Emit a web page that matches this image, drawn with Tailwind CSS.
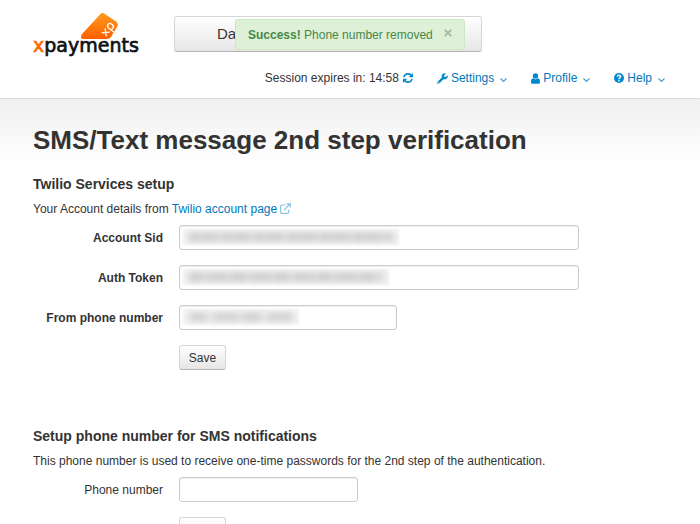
<!DOCTYPE html>
<html lang="en">
<head>
    <meta charset="UTF-8">
    <meta name="viewport" content="width=device-width, initial-scale=1.0">
    <title>X-Payments - SMS/Text message 2nd step verification</title>
    <script src="https://cdn.jsdelivr.net/npm/@tailwindcss/browser@4"></script>
</head>
<body class="bg-white font-['Liberation_Sans',Arial,sans-serif] text-[12px] leading-4 text-[#333333]">

    <!-- Alert -->
    <div role="alert" class="absolute z-10 top-[19px] left-1/2 -translate-x-1/2 w-[230px] h-[31px] pl-3 pr-3 flex items-center justify-between rounded-[3px] border border-[#d0e6bf] bg-[#dff0d8] text-[#468847] whitespace-nowrap">
        <span><strong>Success!</strong> Phone number removed</span>
        <button type="button" aria-label="Close" class="pb-1 text-[#acbfa7]">
            <svg class="w-[8px] h-[8px]" viewBox="0 0 8 8" fill="none" stroke="currentColor" stroke-width="2"><path d="M.7.7l6.600 6.600M7.300.7L.7 7.300"/></svg>
        </button>
    </div>

    <header class="h-[99px] border-b border-[#dddddd] flex flex-col">
        <div class="flex items-start pl-[33px]">
            <a href="#" class="w-[141px] shrink-0 pt-3" aria-label="xpayments">
                <svg class="w-[108px] h-[46px]" viewBox="0 0 108 46">
                    <defs>
                        <linearGradient id="card" x1="0" y1="0" x2="0" y2="1">
                            <stop offset="0" stop-color="#ff9a1f"/>
                            <stop offset="1" stop-color="#ff6000"/>
                        </linearGradient>
                    </defs>
                    <path d="M67 2.500Q69 0 72 2L83 9.500Q86 12 84 15L78 25Q76.500 27 74 27H51Q46 27 49 22Z" fill="url(#card)"/>
                    <g transform="translate(75 17.500) rotate(-52)" fill="none" stroke="#fff" stroke-width="1.300">
                        <path d="M-6.500 -3l5.500 6M-1 -3l-5.500 6M1.500 6.500V-.5Q1.500 -3 4 -3T6.500 -.5V.5Q6.500 3 4 3H1.500"/>
                    </g>
                    <text x="0" y="40" font-family="DejaVu Sans, sans-serif" font-size="19" fill="#111" stroke="#111" stroke-width=".7"><tspan fill="#ff6a00" stroke="#ff6a00">x</tspan>payments</text>
                </svg>
            </a>
            <button type="button" class="mt-4 w-[308px] h-[36px] pl-[42px] text-left text-[15px] leading-5 rounded-[3px] border border-[#d6d6d6] border-b-[#b3b3b3] bg-linear-to-b from-white to-[#e6e6e6]">Da</button>
        </div>
        <nav class="mt-3 pr-[35px] flex items-center justify-end">
            <span>Session expires in: 14:58</span>
            <a href="#" class="ml-1 text-[#0088cc]" aria-label="Refresh session">
                <svg class="w-[10px] h-[10px]" viewBox="0 0 1536 1536" fill="currentColor"><path d="M1511 928q0 5-1 7-64 268-268 434.500T764 1536q-146 0-282.500-55T238 1324l-129 129q-19 19-45 19t-45-19-19-45V960q0-26 19-45t45-19h448q26 0 45 19t19 45-19 45l-137 137q71 66 161 102t187 36q134 0 250-65t186-179q11-17 53-117 8-23 30-23h192q13 0 22.500 9.500t9.500 22.500zm25-800v448q0 26-19 45t-45 19h-448q-26 0-45-19t-19-45 19-45l138-138Q969 256 768 256q-134 0-250 65T332 500q-11 17-53 117-8 23-30 23H50q-13 0-22.500-9.500T18 608v-7q65-268 270-434.500T768 0q146 0 284 55.500T1297 212l130-129q19-19 45-19t45 19 19 45z"/></svg>
            </a>
            <a href="#" class="ml-6 flex items-center text-[#0077bb]">
                <svg class="w-[11px] h-[11px] mr-[3px] text-[#0088cc]" viewBox="0 0 512 512" fill="currentColor"><path d="M507 117c-2-9-14-12-20-5l-75 74-68-11-11-68 75-75c6-6 4-18-5-20-50-12-105 1-144 40-42 42-53 103-34 156L19 414c-25 25-25 54 0 79s54 25 79 0l206-206c53 19 115 8 156-34 39-39 53-94 47-136zM64 472a24 24 0 110-48 24 24 0 010 48z"/></svg>
                Settings
                <svg class="w-[7px] h-[7px] mt-[2px] ml-[6px]" viewBox="0 0 7 7" fill="none" stroke="#4a9fd0" stroke-width="1.200"><path d="M.5 2.500l3 3 3-3"/></svg>
            </a>
            <a href="#" class="ml-6 flex items-center text-[#0077bb]">
                <svg class="w-[9px] h-[11px] mr-[3px] text-[#0088cc]" viewBox="0 0 9 11" fill="currentColor"><circle cx="4.500" cy="2.900" r="2.700"/><path d="M0 9.200Q0 5.200 2.200 5.200 4.500 7.200 6.800 5.200 9 5.200 9 9.200 9 10.700 7.500 10.700H1.500Q0 10.700 0 9.200Z"/></svg>
                Profile
                <svg class="w-[7px] h-[7px] mt-[2px] ml-[6px]" viewBox="0 0 7 7" fill="none" stroke="#4a9fd0" stroke-width="1.200"><path d="M.5 2.500l3 3 3-3"/></svg>
            </a>
            <a href="#" class="ml-6 flex items-center text-[#0077bb]">
                <svg class="w-[10px] h-[10px] mr-[3px]" viewBox="0 0 10 10"><circle cx="5" cy="5" r="5" fill="#0088cc"/><path d="M3.300 3.700Q3.400 2.200 5 2.200T6.700 3.600Q6.700 4.400 5.800 4.800 5 5.200 5 6.200M5 7v1.400" fill="none" stroke="#fff" stroke-width="1.400"/></svg>
                Help
                <svg class="w-[7px] h-[7px] mt-[2px] ml-[6px]" viewBox="0 0 7 7" fill="none" stroke="#4a9fd0" stroke-width="1.200"><path d="M.5 2.500l3 3 3-3"/></svg>
            </a>
        </nav>
    </header>

    <main class="px-[33px] pt-[25px] pb-8 bg-linear-to-b from-[#f0f0f0] to-white to-[66px]">
        <h1 class="text-[26px] leading-8 font-bold">SMS/Text message 2nd step verification</h1>

        <section class="mt-[18px]">
            <h2 class="text-[14px] leading-5 font-bold">Twilio Services setup</h2>
            <p class="mt-[7px]">Your Account details from
                <a href="#" class="text-[#0077bb]">Twilio account page
                    <svg class="inline w-[11px] h-[11px] -mt-[2px]" viewBox="0 0 11 11" fill="none" stroke="#8fc4de" stroke-width="1.200"><path d="M5.500 2H1.800Q.6 2 .6 3.200V9Q.6 10.300 1.800 10.300H7.500Q8.700 10.300 8.700 9V6.500M4 7L10 1M6.500.8H10.300V4.500"/></svg>
                </a>
            </p>
            <form class="mt-2 grid grid-cols-[130px_1fr] gap-x-4 gap-y-[15px] auto-rows-[25px] items-center">
                <label for="sid" class="text-right font-bold">Account Sid</label>
                <div class="relative">
                    <input id="sid" type="text" class="block w-full max-w-[400px] h-[25px] px-1 rounded-[3px] border border-[#cccccc] bg-white shadow-[inset_0_1px_1px_rgba(0,0,0,0.075)]">
                    <span class="absolute left-1 top-1 w-[216px] h-4 flex items-center justify-center overflow-hidden bg-[#f2f2f2] blur-[1px]">
                        <span class="w-[204px] h-2 bg-[repeating-linear-gradient(90deg,#c6c6c6_0_8px,#d6d6d6_8px_11px,#cacaca_11px_29px,#dedede_29px_33px)] blur-[3px]"></span>
                    </span>
                </div>

                <label for="token" class="text-right font-bold">Auth Token</label>
                <div class="relative">
                    <input id="token" type="text" class="block w-full max-w-[400px] h-[25px] px-1 rounded-[3px] border border-[#cccccc] bg-white shadow-[inset_0_1px_1px_rgba(0,0,0,0.075)]">
                    <span class="absolute left-1 top-1 w-[206px] h-4 flex items-center justify-center overflow-hidden bg-[#f2f2f2] blur-[1px]">
                        <span class="w-[194px] h-2 bg-[repeating-linear-gradient(90deg,#c6c6c6_0_13px,#dadada_13px_18px,#cacaca_18px_39px,#d8d8d8_39px_43px)] blur-[3px]"></span>
                    </span>
                </div>

                <label for="from" class="text-right font-bold">From phone number</label>
                <div class="relative">
                    <input id="from" type="text" class="block w-full max-w-[218px] h-[25px] px-1 rounded-[3px] border border-[#cccccc] bg-white shadow-[inset_0_1px_1px_rgba(0,0,0,0.075)]">
                    <span class="absolute left-1 top-1 w-[116px] h-4 flex items-center justify-center overflow-hidden bg-[#f4f4f4] blur-[1px]">
                        <span class="w-[104px] h-2 bg-[repeating-linear-gradient(90deg,#cccccc_0_18px,#e8e8e8_18px_24px,#cecece_24px_50px,#e4e4e4_50px_54px)] blur-[3px]"></span>
                    </span>
                </div>

                <button type="submit" class="col-start-2 justify-self-start w-[47px] h-[25px] rounded-[3px] border border-[#d6d6d6] border-b-[#b3b3b3] bg-linear-to-b from-white to-[#e6e6e6]">Save</button>
            </form>
        </section>

        <section class="mt-14">
            <h2 class="text-[14px] leading-5 font-bold">Setup phone number for SMS notifications</h2>
            <p class="mt-[7px]">This phone number is used to receive one-time passwords for the 2nd step of the authentication.</p>
            <form class="mt-2 grid grid-cols-[130px_1fr] gap-x-4 gap-y-[15px] auto-rows-[25px] items-center">
                <label for="phone" class="text-right">Phone number</label>
                <input id="phone" type="text" class="block w-full max-w-[179px] h-[25px] px-1 rounded-[3px] border border-[#cccccc] bg-white shadow-[inset_0_1px_1px_rgba(0,0,0,0.075)]">
                <button type="submit" aria-label="Save phone number" class="col-start-2 justify-self-start w-[47px] h-[25px] rounded-[3px] border border-[#d6d6d6] border-b-[#b3b3b3] bg-linear-to-b from-white to-[#e6e6e6]"></button>
            </form>
        </section>
    </main>
</body>
</html>
